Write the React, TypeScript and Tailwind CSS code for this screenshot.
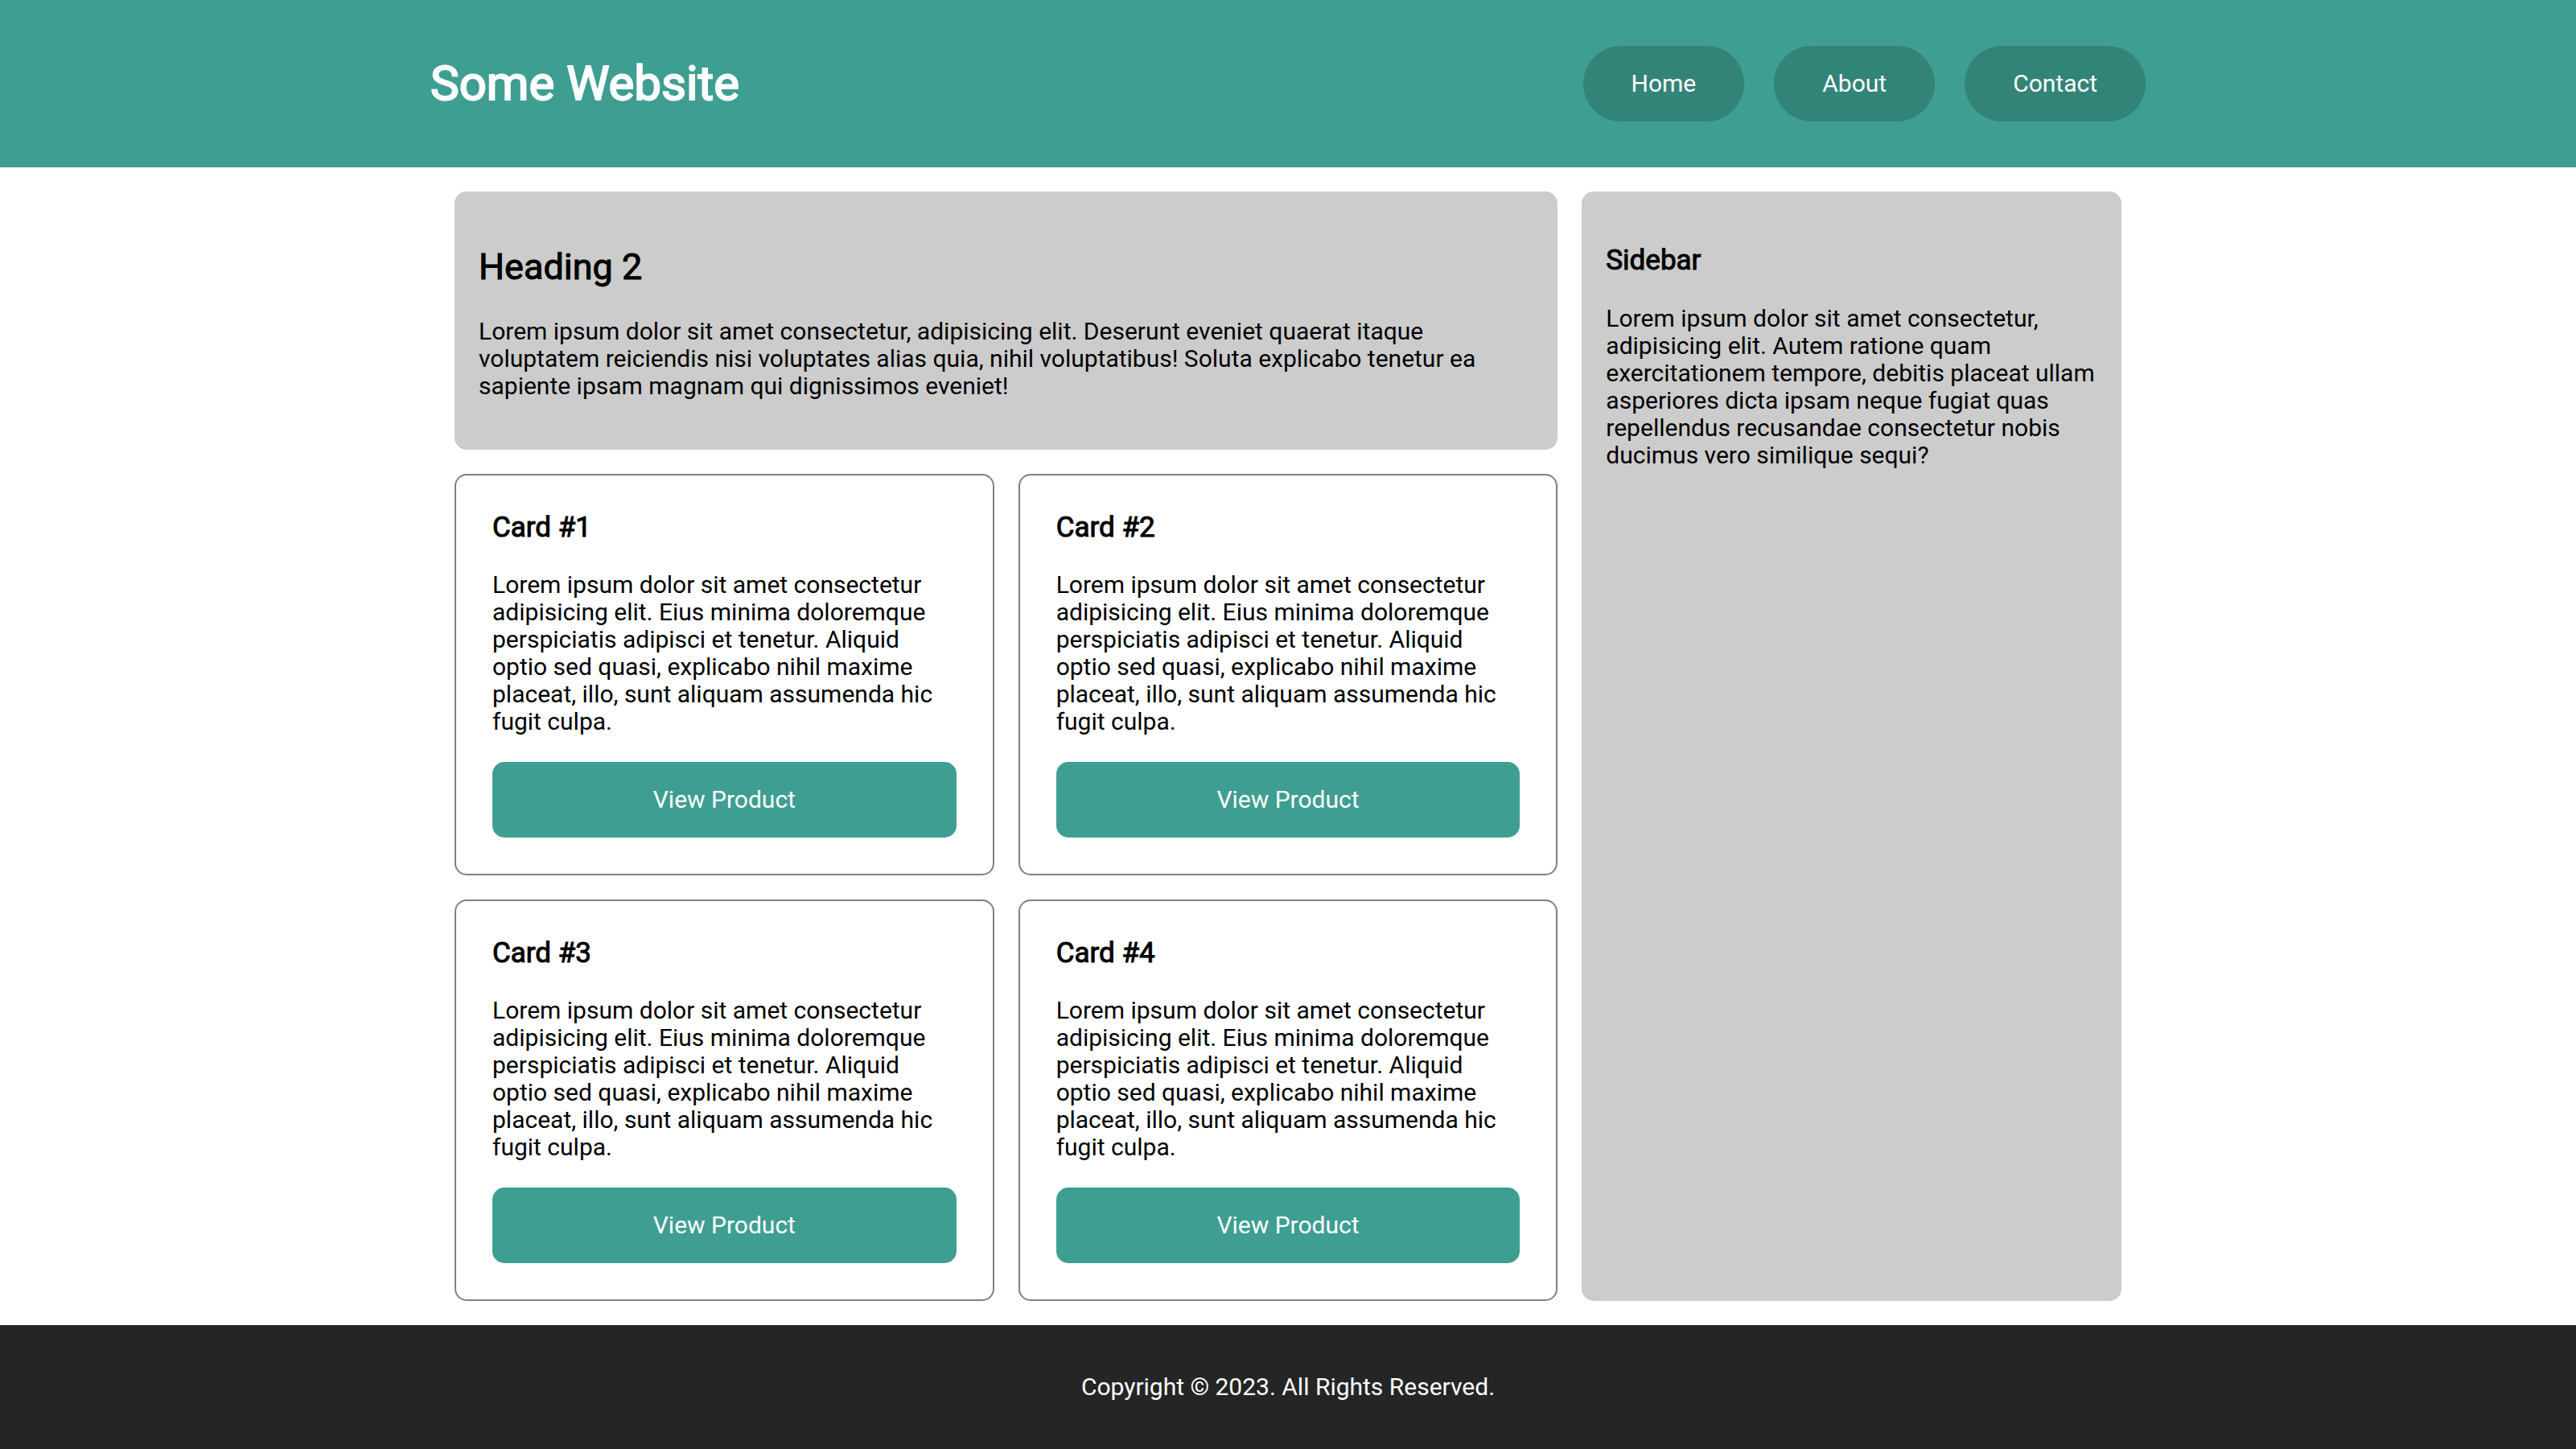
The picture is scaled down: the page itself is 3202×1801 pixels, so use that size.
const NAV_LINKS = ["Home", "About", "Contact"];
const CARDS = [1, 2, 3, 4];

function Header() {
  return (
    <header className="bg-[#3f9e92] text-white">
      <div className="mx-auto flex h-[208px] w-full max-w-[2132px] items-center justify-between">
        <h1 className="text-[60px] leading-[70px] font-normal [-webkit-text-stroke:2px]">Some Website</h1>
        <nav className="flex gap-[37px]">
          {NAV_LINKS.map((label) => (
            <a key={label} href="#" className="rounded-full bg-[#338478] px-[60px] py-[30px]">
              {label}
            </a>
          ))}
        </nav>
      </div>
    </header>
  );
}

function Card({ number }: { number: number }) {
  return (
    <article className="rounded-[15px] border-2 border-[#808080] p-[45px]">
      <h3 className="mb-[34px] text-[35px] leading-[40px] font-normal [-webkit-text-stroke:1px]">
        Card #{number}
      </h3>
      <p className="mb-[33px]">
        Lorem ipsum dolor sit amet consectetur adipisicing elit. Eius minima doloremque perspiciatis
        adipisci et tenetur. Aliquid optio sed quasi, explicabo nihil maxime placeat, illo, sunt
        aliquam assumenda hic fugit culpa.
      </p>
      <button type="button" className="block w-full rounded-[15px] bg-[#3f9e92] py-[30px] text-white">
        View Product
      </button>
    </article>
  );
}

export default function App() {
  return (
    <div className="min-h-screen bg-white font-[Roboto,sans-serif] text-[30px] leading-[34px] text-black">
      <Header />
      <main className="mx-auto grid w-full max-w-[2132px] grid-cols-3 gap-[30px] p-[30px]">
        <section className="col-span-2 rounded-[15px] bg-[#cccccc] px-[30px] pt-[68px] pb-[62px]">
          <h2 className="mb-[37px] text-[45px] leading-[52px] font-normal [-webkit-text-stroke:1px]">
            Heading 2
          </h2>
          <p>
            Lorem ipsum dolor sit amet consectetur, adipisicing elit. Deserunt eveniet quaerat itaque
            voluptatem reiciendis nisi voluptates alias quia, nihil voluptatibus! Soluta explicabo
            tenetur ea sapiente ipsam magnam qui dignissimos eveniet!
          </p>
        </section>
        <aside className="col-start-3 row-span-3 row-start-1 rounded-[15px] bg-[#cccccc] px-[30px] pt-[66px] pb-[60px]">
          <h3 className="mb-[35px] text-[35px] leading-[40px] font-normal [-webkit-text-stroke:1px]">
            Sidebar
          </h3>
          <p>
            Lorem ipsum dolor sit amet consectetur, adipisicing elit. Autem ratione quam
            exercitationem tempore, debitis placeat ullam asperiores dicta ipsam neque fugiat quas
            repellendus recusandae consectetur nobis ducimus vero similique sequi?
          </p>
        </aside>
        {CARDS.map((number) => (
          <Card key={number} number={number} />
        ))}
      </main>
      <footer className="bg-[#252525] py-[60px] text-center text-white">
        <p>Copyright © 2023. All Rights Reserved.</p>
      </footer>
    </div>
  );
}
